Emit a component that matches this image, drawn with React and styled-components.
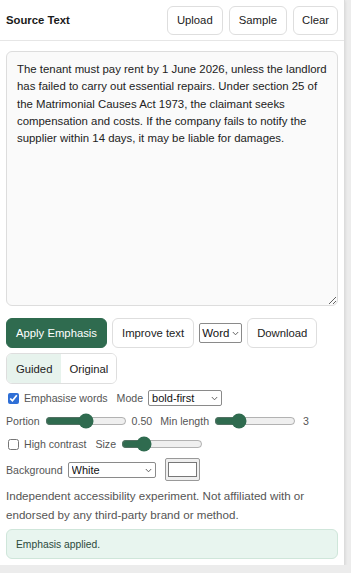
import React, { useState } from 'react';
import styled, { createGlobalStyle } from 'styled-components';

const GlobalStyle = createGlobalStyle`
  html, body {
    margin: 0;
    padding: 0;
    background: #ececec;
    font-family: "Liberation Sans", Arial, sans-serif;
    color: #222;
  }
`;

const Panel = styled.div`
  width: 345px;
  background: #fff;
  border-right: 1px solid #dcdcdc;
  box-shadow: 0 1px 3px rgba(0, 0, 0, 0.12);
  padding-bottom: 6px;
  box-sizing: border-box;
`;

const Header = styled.header`
  height: 41px;
  display: flex;
  align-items: center;
  justify-content: space-between;
  padding: 0 6px;
  border-bottom: 1px solid #e6e6e6;
  box-sizing: border-box;
`;

const Title = styled.h1`
  margin: 0;
  font-size: 11.3px;
  font-weight: 700;
  color: #1a1a1a;
`;

const HeaderButtons = styled.div`
  display: flex;
  gap: 6px;
`;

const Button = styled.button`
  height: ${(p) => p.$h || 30}px;
  padding: 0 ${(p) => p.$px || 9}px;
  font-family: inherit;
  font-size: 11.3px;
  color: ${(p) => (p.$primary ? '#fff' : '#222')};
  background: ${(p) => (p.$primary ? '#2f6b4f' : '#fff')};
  border: 1px solid ${(p) => (p.$primary ? '#2f6b4f' : '#dedede')};
  border-radius: 6px;
  cursor: pointer;
`;

const Body = styled.div`
  padding: 10px 6px 0;
`;

const TextArea = styled.textarea`
  display: block;
  width: 100%;
  height: 255px;
  box-sizing: border-box;
  padding: 9px 8px 9px 10px;
  font-family: inherit;
  font-size: 11.4px;
  line-height: 17.3px;
  color: #222;
  background: #fafafa;
  border: 1px solid #dddddd;
  border-radius: 6px;
  resize: vertical;
`;

const Row = styled.div`
  display: flex;
  align-items: center;
  gap: ${(p) => p.$gap || 5}px;
  margin-top: ${(p) => p.$mt || 0}px;
  font-size: 10.6px;
  color: #555;
`;

const SelectWrap = styled.span`
  position: relative;
  display: inline-flex;
  width: ${(p) => p.$w}px;
  height: ${(p) => p.$h || 16}px;
`;

const NativeSelect = styled.select`
  appearance: none;
  width: 100%;
  height: 100%;
  box-sizing: border-box;
  margin: 0;
  padding: 0 ${(p) => p.$pr || 14}px 0 ${(p) => p.$pl || 3}px;
  font-family: inherit;
  font-size: ${(p) => p.$fs || 11}px;
  color: #111;
  border: 1px solid #8a8a8a;
  border-radius: 2px;
  background: #fff;
`;

const Chevron = styled.svg`
  position: absolute;
  right: ${(p) => p.$r || 4}px;
  top: 50%;
  width: 7px;
  height: 5px;
  margin-top: -2px;
  pointer-events: none;
`;

function Select({ w, h, fs, pl, pr, cr, children }) {
  return (
    <SelectWrap $w={w} $h={h}>
      <NativeSelect $fs={fs} $pl={pl} $pr={pr}>
        {children}
      </NativeSelect>
      <Chevron $r={cr} viewBox="0 0 7 5">
        <path d="M0.8 1 L3.5 3.8 L6.2 1" fill="none" stroke="#555" strokeWidth="0.9" />
      </Chevron>
    </SelectWrap>
  );
}

const Segmented = styled.div`
  display: inline-flex;
  margin-top: 5px;
  border: 1px solid #dedede;
  border-radius: 6px;
  overflow: hidden;
`;

const Segment = styled.button`
  height: 29px;
  padding: 0 ${(p) => p.$px}px;
  font-family: inherit;
  font-size: 11.3px;
  color: #222;
  border: none;
  background: ${(p) => (p.$active ? '#e7f3ed' : '#fff')};
`;

const Check = styled.input.attrs({ type: 'checkbox' })`
  margin: 0 0 0 2px;
  width: 11px;
  height: 11px;
  accent-color: #2f6fd6;
`;

const Label = styled.span`
  margin-left: ${(p) => p.$ml || 0}px;
`;

const Range = styled.input.attrs({ type: 'range' })`
  width: 82px;
  margin: 0;
  accent-color: #2f6b4f;
  height: 14px;
`;

const ColorBox = styled.div`
  width: 35px;
  height: 23px;
  box-sizing: border-box;
  border: 1px solid #999;
  border-radius: 2px;
  background: #efefef;
  display: flex;
  align-items: center;
  justify-content: center;
  margin-left: 4px;
  &::after {
    content: '';
    width: 27px;
    height: 13px;
    background: #fff;
    border: 1px solid #777;
  }
`;

const Note = styled.p`
  margin: 5px 0 0;
  font-size: 11.6px;
  line-height: 19px;
  color: #555;
`;

const Status = styled.div`
  margin-top: 5px;
  height: 30px;
  box-sizing: border-box;
  padding: 0 9px;
  display: flex;
  align-items: center;
  font-size: 10.3px;
  color: #2c4a3c;
  background: #e8f5ef;
  border: 1px solid #cfe6da;
  border-radius: 6px;
`;

const sample =
  'The tenant must pay rent by 1 June 2026, unless the landlord has failed to carry out essential repairs. Under section 25 of the Matrimonial Causes Act 1973, the claimant seeks compensation and costs. If the company fails to notify the supplier within 14 days, it may be liable for damages.';

export default function App() {
  const [text, setText] = useState(sample);
  const [view, setView] = useState('guided');

  return (
    <>
      <GlobalStyle />
      <Panel>
        <Header>
          <Title>Source Text</Title>
          <HeaderButtons>
            <Button $h={29} $px={9}>Upload</Button>
            <Button $h={29} $px={9}>Sample</Button>
            <Button $h={29} $px={8}>Clear</Button>
          </HeaderButtons>
        </Header>
        <Body>
          <TextArea value={text} onChange={(e) => setText(e.target.value)} />
          <Row $mt={12} $gap={5}>
            <Button $primary $px={9}>Apply Emphasis</Button>
            <Button $px={9}>Improve text</Button>
            <Select w={43} h={20} fs={11.5} pl={2} pr={10} cr={3}>
              <option>Word</option>
            </Select>
            <Button $px={9}>Download</Button>
          </Row>
          <Segmented>
            <Segment $px={9} $active={view === 'guided'} onClick={() => setView('guided')}>
              Guided
            </Segment>
            <Segment $px={8} $active={view === 'original'} onClick={() => setView('original')}>
              Original
            </Segment>
          </Segmented>
          <Row $mt={6}>
            <Check defaultChecked />
            <Label>Emphasise words</Label>
            <Label $ml={4}>Mode</Label>
            <Select w={74}>
              <option>bold-first</option>
            </Select>
          </Row>
          <Row $mt={8}>
            <Label>Portion</Label>
            <Range defaultValue={50} />
            <Label>0.50</Label>
            <Label $ml={3}>Min length</Label>
            <Range defaultValue={25} />
            <Label $ml={2}>3</Label>
          </Row>
          <Row $mt={9}>
            <Check />
            <Label>High contrast</Label>
            <Label $ml={4}>Size</Label>
            <Range defaultValue={22} />
          </Row>
          <Row $mt={7}>
            <Label>Background</Label>
            <Select w={88}>
              <option>White</option>
            </Select>
            <ColorBox />
          </Row>
          <Note>
            Independent accessibility experiment. Not affiliated with or endorsed by any
            third-party brand or method.
          </Note>
          <Status>Emphasis applied.</Status>
        </Body>
      </Panel>
    </>
  );
}
